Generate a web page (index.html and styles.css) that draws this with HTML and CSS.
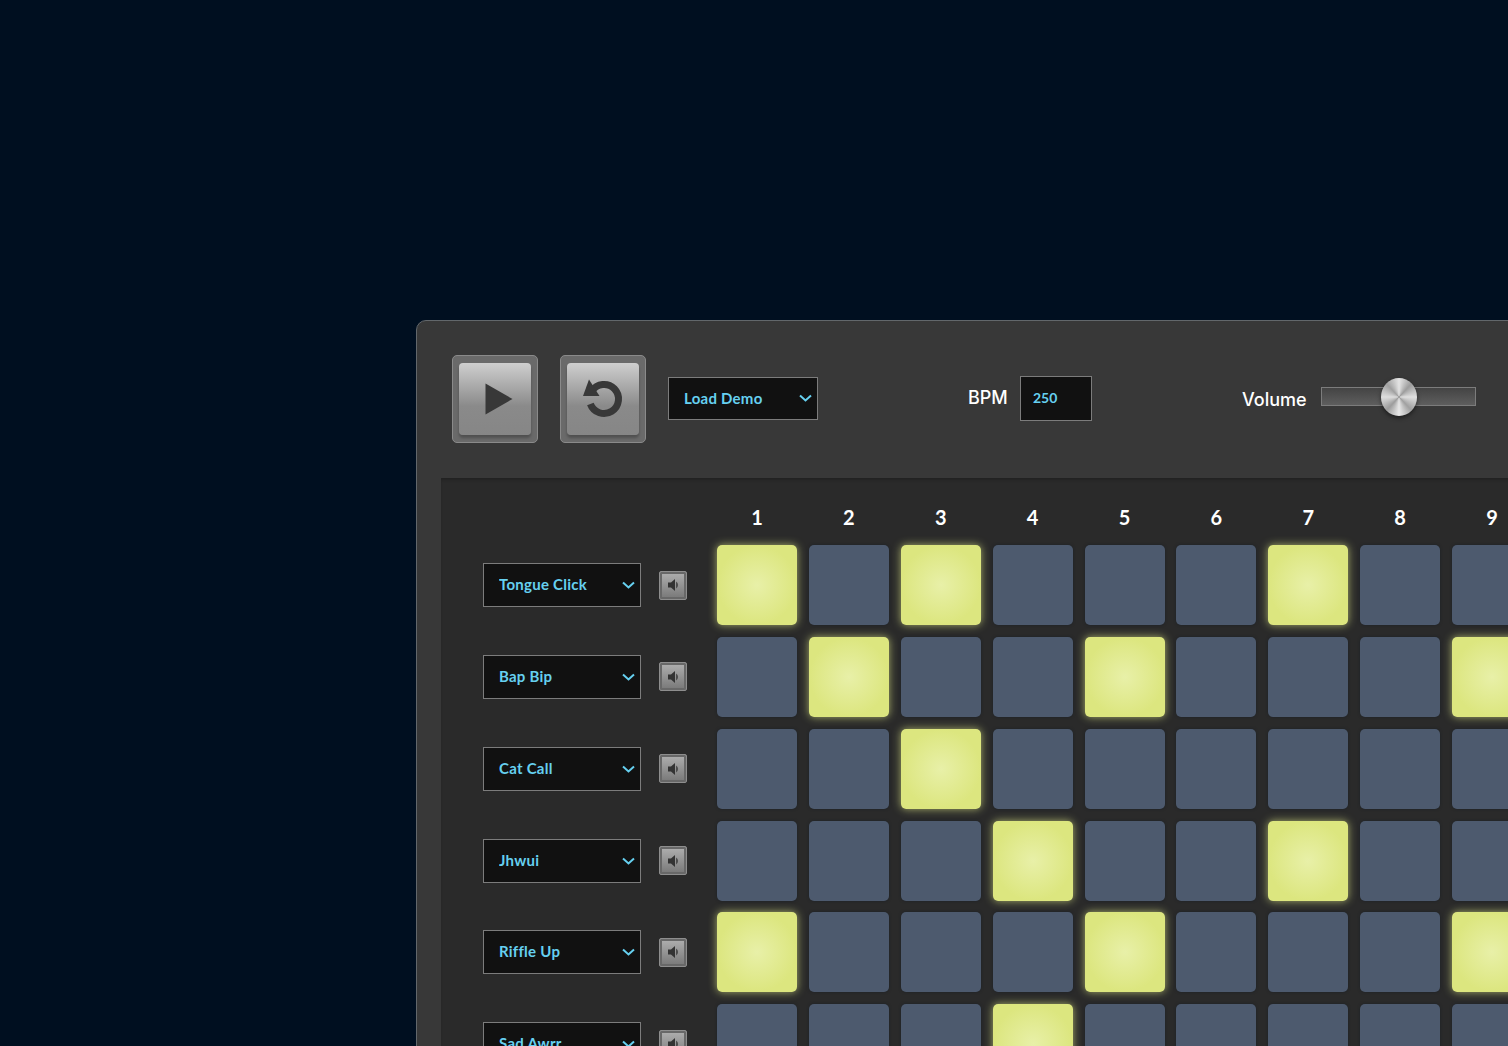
FILE: index.html
```html
<!DOCTYPE html>
<html lang="en">
<head>
    <meta charset="UTF-8">
    <meta name="viewport" content="width=device-width, initial-scale=1.0">
    <title>Beat Sequencer</title>
    <link rel="stylesheet" href="styles.css">
</head>
<body>
    <div class="machine">
        <div class="controls">
            <button class="big-btn" type="button" aria-label="Play">
                <span class="big-cap">
                    <svg class="play-icon" width="28" height="32" viewBox="0 0 28 32"><polygon points="0.5,0.5 27.5,16 0.5,31.5" fill="#383838"/></svg>
                </span>
            </button>
            <button class="big-btn" type="button" aria-label="Reset">
                <span class="big-cap">
                    <svg width="42" height="42" viewBox="0 0 42 42">
                        <path d="M8.400 26 A14.500 14.500 0 1 0 9.900 13" fill="none" stroke="#383838" stroke-width="7"/>
                        <polygon points="7,1.500 1,18 17.500,18" fill="#383838"/>
                    </svg>
                </span>
            </button>
            <select class="dark-select demo-select">
                <option>Load Demo</option>
            </select>
            <label class="bpm-label" for="bpm">BPM</label>
            <input class="bpm-input" id="bpm" type="text" value="250">
            <label class="volume-label" for="volume">Volume</label>
            <input class="volume" id="volume" type="range" min="0" max="100" value="50">
        </div>
        <div class="board">
            <div class="steps">
                <span>1</span><span>2</span><span>3</span><span>4</span><span>5</span><span>6</span><span>7</span><span>8</span><span>9</span>
            </div>
            <div class="track">
                <select class="dark-select"><option>Tongue Click</option></select>
                <button class="mute" type="button" aria-label="Mute"><svg width="12" height="14" viewBox="0 0 12 14"><path class="spk" d="M1 4.500h3L8 1v12L4 9.500H1z"/><path class="spk-wave" d="M9 3.500a4 4 0 0 1 0 7z"/></svg></button>
                <div class="pads">
                    <div class="pad on"></div><div class="pad"></div><div class="pad on"></div><div class="pad"></div><div class="pad"></div><div class="pad"></div><div class="pad on"></div><div class="pad"></div><div class="pad"></div>
                </div>
            </div>
            <div class="track">
                <select class="dark-select"><option>Bap Bip</option></select>
                <button class="mute" type="button" aria-label="Mute"><svg width="12" height="14" viewBox="0 0 12 14"><path class="spk" d="M1 4.500h3L8 1v12L4 9.500H1z"/><path class="spk-wave" d="M9 3.500a4 4 0 0 1 0 7z"/></svg></button>
                <div class="pads">
                    <div class="pad"></div><div class="pad on"></div><div class="pad"></div><div class="pad"></div><div class="pad on"></div><div class="pad"></div><div class="pad"></div><div class="pad"></div><div class="pad on"></div>
                </div>
            </div>
            <div class="track">
                <select class="dark-select"><option>Cat Call</option></select>
                <button class="mute" type="button" aria-label="Mute"><svg width="12" height="14" viewBox="0 0 12 14"><path class="spk" d="M1 4.500h3L8 1v12L4 9.500H1z"/><path class="spk-wave" d="M9 3.500a4 4 0 0 1 0 7z"/></svg></button>
                <div class="pads">
                    <div class="pad"></div><div class="pad"></div><div class="pad on"></div><div class="pad"></div><div class="pad"></div><div class="pad"></div><div class="pad"></div><div class="pad"></div><div class="pad"></div>
                </div>
            </div>
            <div class="track">
                <select class="dark-select"><option>Jhwui</option></select>
                <button class="mute" type="button" aria-label="Mute"><svg width="12" height="14" viewBox="0 0 12 14"><path class="spk" d="M1 4.500h3L8 1v12L4 9.500H1z"/><path class="spk-wave" d="M9 3.500a4 4 0 0 1 0 7z"/></svg></button>
                <div class="pads">
                    <div class="pad"></div><div class="pad"></div><div class="pad"></div><div class="pad on"></div><div class="pad"></div><div class="pad"></div><div class="pad on"></div><div class="pad"></div><div class="pad"></div>
                </div>
            </div>
            <div class="track">
                <select class="dark-select"><option>Riffle Up</option></select>
                <button class="mute" type="button" aria-label="Mute"><svg width="12" height="14" viewBox="0 0 12 14"><path class="spk" d="M1 4.500h3L8 1v12L4 9.500H1z"/><path class="spk-wave" d="M9 3.500a4 4 0 0 1 0 7z"/></svg></button>
                <div class="pads">
                    <div class="pad on"></div><div class="pad"></div><div class="pad"></div><div class="pad"></div><div class="pad on"></div><div class="pad"></div><div class="pad"></div><div class="pad"></div><div class="pad on"></div>
                </div>
            </div>
            <div class="track">
                <select class="dark-select"><option>Sad Awrr</option></select>
                <button class="mute" type="button" aria-label="Mute"><svg width="12" height="14" viewBox="0 0 12 14"><path class="spk" d="M1 4.500h3L8 1v12L4 9.500H1z"/><path class="spk-wave" d="M9 3.500a4 4 0 0 1 0 7z"/></svg></button>
                <div class="pads">
                    <div class="pad"></div><div class="pad"></div><div class="pad"></div><div class="pad on"></div><div class="pad"></div><div class="pad"></div><div class="pad"></div><div class="pad"></div><div class="pad"></div>
                </div>
            </div>
        </div>
    </div>
</body>
</html>
```

FILE: styles.css
```css
body {
    font-family: Lato, "Open Sans", sans-serif;
    background-color: #000f20;
    margin: 0;
    height: 100vh;
    box-sizing: border-box;
    padding: 320px 0 0 416px;
    overflow: hidden;
}
.machine {
    width: 1300px;
    height: 900px;
    box-sizing: border-box;
    background: #383838;
    border: 1px solid #62676b;
    border-radius: 10px;
    padding-left: 24px;
}
.controls {
    height: 157px;
    box-sizing: border-box;
    display: flex;
    align-items: center;
    padding: 0 0 2px 11px;
}
.big-btn {
    width: 86px;
    height: 88px;
    padding: 0;
    margin-right: 22px;
    flex: none;
    display: flex;
    align-items: center;
    justify-content: center;
    background: #6a6a6a;
    border: 1px solid #8a8a8a;
    border-radius: 5px;
}
.big-cap {
    width: 72px;
    height: 72px;
    display: flex;
    align-items: center;
    justify-content: center;
    background: linear-gradient(#cfcfcf, #8a8a8a 60%, #868686);
    border-radius: 4px;
    box-shadow: 0 3px 3px rgba(0, 0, 0, 0.25);
}
.play-icon {
    margin-left: 7px;
}
.dark-select {
    appearance: none;
    -webkit-appearance: none;
    flex: none;
    width: 158px;
    height: 44px;
    box-sizing: border-box;
    padding: 0 0 2px 15px;
    font-family: inherit;
    font-size: 15px;
    font-weight: 700;
    letter-spacing: 0.25px;
    color: #66d0f0;
    background-color: #111;
    background-image: url("data:image/svg+xml,%3Csvg xmlns='http://www.w3.org/2000/svg' width='13' height='8' viewBox='0 0 13 8'%3E%3Cpath d='M1 1.500l5.500 5 5.500-5' fill='none' stroke='%2366d0f0' stroke-width='2'/%3E%3C/svg%3E");
    background-repeat: no-repeat;
    background-position: right 5px center;
    border: 1px solid #7c7c7c;
    border-radius: 0;
}
.demo-select {
    width: 150px;
    height: 43px;
    margin-bottom: 1px;
    padding-bottom: 0;
}
.bpm-label,
.volume-label {
    flex: none;
    font-family: Inter, Lato, sans-serif;
    font-size: 18px;
    font-weight: 500;
    color: #fff;
    white-space: nowrap;
}
.bpm-label {
    width: 39px;
    margin: 0 0 3px 150px;
}
.bpm-input {
    flex: none;
    width: 72px;
    height: 45px;
    box-sizing: border-box;
    margin-left: 13px;
    padding: 0 0 2px 12px;
    font-family: inherit;
    font-size: 14px;
    font-weight: 700;
    color: #66d0f0;
    background: #111;
    border: 1px solid #7c7c7c;
}
.volume-label {
    width: 65px;
    margin: 1px 0 0 150px;
}
.volume {
    flex: none;
    appearance: none;
    -webkit-appearance: none;
    width: 155px;
    height: 19px;
    margin: 0 0 5px 14px;
    background: linear-gradient(#444, #5e5e5e);
    border: 1px solid #7c7c7c;
    box-sizing: border-box;
}
.volume::-webkit-slider-thumb {
    -webkit-appearance: none;
    width: 36px;
    height: 38px;
    margin-top: 2px;
    border-radius: 50%;
    background: conic-gradient(#e4e4e4, #9c9c9c 12%, #e0e0e0 25%, #a0a0a0 38%, #e8e8e8 50%, #9c9c9c 62%, #dedede 75%, #a0a0a0 88%, #e4e4e4);
    box-shadow: 0 2px 4px rgba(0, 0, 0, 0.5);
}
.board {
    height: 760px;
    background: #2a2a2a;
    box-shadow: inset 0 3px 3px -1px #222;
    padding: 0 0 0 42px;
}
.steps {
    display: grid;
    grid-template-columns: repeat(9, 80px);
    column-gap: 11.875px;
    height: 67px;
    padding: 0 0 0 234px;
    align-items: end;
    box-sizing: border-box;
}
.steps span {
    text-align: center;
    font-size: 20px;
    font-weight: 700;
    color: #fff;
    padding-bottom: 16px;
    line-height: 24px;
}
.track {
    display: flex;
    align-items: center;
    height: 80px;
    margin-bottom: 11.85px;
}
.mute {
    flex: none;
    width: 28px;
    height: 29px;
    margin: 0 30px 0 18px;
    padding: 0;
    display: flex;
    align-items: center;
    justify-content: center;
    background: linear-gradient(#b0b0b0, #777);
    border: 1px solid #8e8e8e;
    border-radius: 2px;
    box-shadow: inset 0 0 0 2px #686868;
}
.spk {
    fill: #333;
}
.spk-wave {
    fill: #4c4c4c;
}
.pads {
    display: grid;
    grid-template-columns: repeat(9, 80px);
    column-gap: 11.875px;
}
.pad {
    height: 80px;
    background: #4d5a6e;
    border-radius: 5px;
    box-shadow: 0 0 3px #1c2026;
}
.pad.on {
    background: radial-gradient(circle, #e8f0a8, #dce67f 70%);
    box-shadow: 0 0 9px rgba(224, 232, 134, 0.7);
}
```
